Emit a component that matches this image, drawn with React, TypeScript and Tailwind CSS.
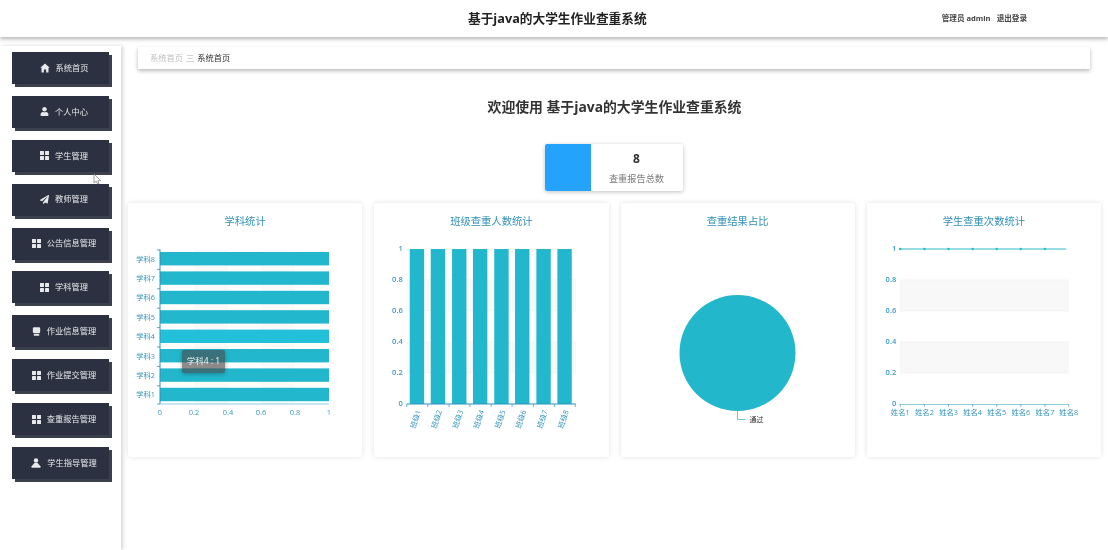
import { FaUser, FaPaperPlane } from "react-icons/fa";
import type { ReactNode } from "react";

const font = { fontFamily: '"Open Sans","Noto Sans CJK SC",sans-serif' };
const TEAL = "#22b7cc";
const AXIS = "#2f93bd";
const LABEL = "#3a9cc6";

function Home() {
  return (
    <svg viewBox="0 0 16 16" className="w-[10px] h-[10px]" fill="currentColor">
      <path d="M8 0.8 L15.6 7.6 L13.6 7.6 L13.6 15 L9.8 15 L9.8 10.4 L6.2 10.4 L6.2 15 L2.4 15 L2.4 7.6 L0.4 7.6 Z" />
    </svg>
  );
}

function Grid() {
  return (
    <svg viewBox="0 0 16 16" className="w-[9px] h-[9px]" fill="currentColor">
      <rect x="0" y="0" width="7" height="7" rx="0.6" />
      <rect x="9" y="0" width="7" height="7" rx="0.6" />
      <rect x="0" y="9" width="7" height="7" rx="0.6" />
      <rect x="9" y="9" width="7" height="7" rx="0.6" />
    </svg>
  );
}

function Order() {
  return (
    <svg viewBox="0 0 16 16" className="w-[9px] h-[9px]" fill="currentColor">
      <rect x="1.5" y="0.5" width="13" height="10.5" rx="2" />
      <rect x="3" y="12.5" width="10" height="3" rx="1.2" />
    </svg>
  );
}

function Teacher() {
  return (
    <svg viewBox="0 0 16 16" className="w-[10px] h-[10px]" fill="currentColor">
      <circle cx="8" cy="4" r="3.6" />
      <path d="M5.5 8 L10.5 8 L15 13 L15 15.5 L1 15.5 L1 13 Z" />
    </svg>
  );
}

const menu: { label: string; icon: ReactNode }[] = [
  { label: "系统首页", icon: <Home /> },
  { label: "个人中心", icon: <FaUser className="w-[9px] h-[9px]" /> },
  { label: "学生管理", icon: <Grid /> },
  { label: "教师管理", icon: <FaPaperPlane className="w-[9px] h-[9px]" /> },
  { label: "公告信息管理", icon: <Grid /> },
  { label: "学科管理", icon: <Grid /> },
  { label: "作业信息管理", icon: <Order /> },
  { label: "作业提交管理", icon: <Grid /> },
  { label: "查重报告管理", icon: <Grid /> },
  { label: "学生指导管理", icon: <Teacher /> },
];

function Sidebar() {
  return (
    <aside className="w-[121px] shrink-0 bg-white shadow-[2px_0_4px_rgba(0,0,0,0.16)] pt-[6px] pl-[12px] flex flex-col gap-[11.9px]">
      {menu.map((m) => (
        <div
          key={m.label}
          className="w-[97px] h-[32px] bg-[#2b3140] shadow-[3px_3px_0_#3a404c] flex items-center justify-center pl-[7px] gap-[6px] text-[#e8e9eb] text-[8.25px]"
        >
          {m.icon}
          <span>{m.label}</span>
        </div>
      ))}
    </aside>
  );
}

function Card({ title, originX, children }: { title: string; originX: number; children: ReactNode }) {
  return (
    <div className="relative h-[254px] bg-white rounded-[2px] shadow-[0_0_5px_rgba(0,0,0,0.12)] flex flex-col">
      <h3 className="h-[38px] pt-[10px] text-center text-[10.3px] leading-[16px] text-[#2f8fb8]">{title}</h3>
      <svg viewBox={`${originX} 241 234.25 216`} className="w-full h-[216px]" style={font}>
        {children}
      </svg>
    </div>
  );
}

const yVals = ["1", "0.8", "0.6", "0.4", "0.2", "0"];
const yPos = [249, 280, 311, 342, 373, 404];

function Bands({ x1, x2 }: { x1: number; x2: number }) {
  return (
    <>
      <rect x={x1} y={280} width={x2 - x1} height={31} fill="#f8f8f8" />
      <rect x={x1} y={342} width={x2 - x1} height={31} fill="#f8f8f8" />
      {[280, 311, 342, 373].map((y) => (
        <line key={y} x1={x1} x2={x2} y1={y} y2={y} stroke="#f0f0f0" strokeWidth="0.6" />
      ))}
    </>
  );
}

function YLabels({ x }: { x: number }) {
  return (
    <>
      {yVals.map((v, i) => (
        <text key={v} x={x} y={yPos[i] + 2} textAnchor="end" fontSize="7.5" fontWeight="600" fill={LABEL}>
          {v}
        </text>
      ))}
    </>
  );
}

function SubjectChart() {
  const ticks = [160, 194, 228, 261, 295, 329];
  const tv = ["0", "0.2", "0.4", "0.6", "0.8", "1"];
  const bars = [252, 271.4, 290.8, 310.2, 329.6, 349, 368.4, 387.8];
  return (
    <Card title="学科统计" originX={128}>
      <rect x={194} y={250} width={34} height={154} fill="#fafafa" />
      <rect x={261} y={250} width={34} height={154} fill="#fafafa" />
      {bars.map((y, i) => (
        <g key={y}>
          <rect x={160} y={y} width={169} height={13.4} fill={i === 4 ? "#22c1d9" : TEAL} />
          <text x={155} y={y + 9.5} textAnchor="end" fontSize="7.3" fill={AXIS}>
            {"学科" + (8 - i)}
          </text>
          <line x1={157} x2={160} y1={y - 2} y2={y - 2} stroke={AXIS} strokeWidth="0.8" />
        </g>
      ))}
      <line x1={157} x2={160} y1={404} y2={404} stroke={AXIS} strokeWidth="0.8" />
      <line x1={160} x2={160} y1={249.5} y2={404} stroke={AXIS} strokeWidth="1" />
      <line x1={160} x2={329} y1={404} y2={404} stroke="#8ccfe0" strokeWidth="1" />
      {ticks.map((x, i) => (
        <text key={x} x={x} y={415} textAnchor="middle" fontSize="7.5" fill={LABEL}>
          {tv[i]}
        </text>
      ))}
    </Card>
  );
}

function ClassChart() {
  const bars = [410, 431, 452.3, 473.2, 494.5, 515.3, 536.6, 557.6];
  return (
    <Card title="班级查重人数统计" originX={374.25}>
      <Bands x1={407} x2={576} />
      {bars.map((x, i) => (
        <g key={x}>
          <rect x={x} y={249} width={14.4} height={155} fill={TEAL} />
          <line x1={x - 3} x2={x - 3} y1={404} y2={407} stroke={AXIS} strokeWidth="0.7" />
          <text
            transform={`translate(${x + 9.5} 410.5) rotate(-72)`}
            textAnchor="end"
            dominantBaseline="middle"
            fontSize="7.3"
            fill={AXIS}
          >
            {"班级" + (i + 1)}
          </text>
        </g>
      ))}
      <line x1={575.5} x2={575.5} y1={404} y2={407} stroke={AXIS} strokeWidth="0.7" />
      <line x1={407} x2={576} y1={404} y2={404} stroke={AXIS} strokeWidth="1" />
      <YLabels x={403} />
    </Card>
  );
}

function ResultChart() {
  return (
    <Card title="查重结果占比" originX={620.5}>
      <circle cx={737} cy={353} r={58} fill="#23b7cc" />
      <path d="M737 411 V419.5 H745" fill="none" stroke={TEAL} strokeWidth="0.7" />
      <text x={749} y={422} fontSize="7" fill="#333">
        通过
      </text>
    </Card>
  );
}

function StudentChart() {
  const ticks = [900, 924.2, 948.3, 972.4, 996.5, 1020.6, 1044.7, 1068.5];
  return (
    <Card title="学生查重次数统计" originX={866.75}>
      <Bands x1={899.5} x2={1068.5} />
      <line x1={899.5} x2={1066} y1={249} y2={249} stroke="#30bcc6" strokeWidth="1.1" />
      {ticks.slice(0, 7).map((x) => (
        <circle key={x} cx={x} cy={249} r={1.3} fill="#30bcc6" />
      ))}
      <line x1={899.5} x2={1068.5} y1={404.5} y2={404.5} stroke="#8ccfe0" strokeWidth="1" />
      {ticks.map((x, i) => (
        <g key={x}>
          <line x1={x} x2={x} y1={404} y2={407} stroke={AXIS} strokeWidth="0.6" />
          <text x={x} y={415} textAnchor="middle" fontSize="7.3" fill={AXIS}>
            {"姓名" + (i + 1)}
          </text>
        </g>
      ))}
      <YLabels x={896} />
    </Card>
  );
}

export default function App() {
  return (
    <div className="relative w-[1108px] h-[550px] overflow-hidden bg-white flex flex-col blur-[0.35px]" style={font}>
      <header className="h-[37px] shrink-0 bg-white shadow-[0_2px_4px_rgba(0,0,0,0.3)] flex items-center z-10">
        <h1 className="ml-[468px] text-[12.7px] font-bold text-[#222]">基于java的大学生作业查重系统</h1>
        <div className="ml-auto mr-[81px] text-[7.6px] font-bold text-[#444] flex gap-[6px]">
          <span>管理员 admin</span>
          <span>退出登录</span>
        </div>
      </header>
      <div className="flex-1 flex pt-[9px] min-h-0">
        <Sidebar />
        <main className="flex-1 flex flex-col min-w-0 pl-[7px] pr-[7px]">
          <div className="ml-[10px] mr-[11px] mt-[1px] h-[22px] bg-white shadow-[0_2px_4px_rgba(0,0,0,0.28)] flex items-center pl-[12px] text-[8.25px] shrink-0">
            <span className="text-[#c0c0c0]">系统首页</span>
            <span className="text-[#c8c8c8] mx-[3px]">三</span>
            <span className="text-[#333]">系统首页</span>
          </div>
          <h2 className="mt-[28px] h-[20px] leading-[20px] text-center text-[13.85px] font-bold text-[#333] shrink-0">
            欢迎使用 基于java的大学生作业查重系统
          </h2>
          <div className="mt-[27px] self-center -translate-x-[1px] w-[138px] h-[47px] bg-white rounded-[2px] shadow-[0_1px_4px_rgba(0,0,0,0.25)] flex shrink-0">
            <div className="w-[46px] bg-[#24a3fd] rounded-l-[2px]" />
            <div className="flex-1 flex flex-col items-center">
              <div className="mt-[6px] h-[17px] leading-[17px] text-[12px] font-bold text-[#333]">8</div>
              <div className="mt-[5px] text-[9.2px] leading-[14px] text-[#7a7a7a]">查重报告总数</div>
            </div>
          </div>
          <div className="mt-[12px] grid grid-cols-4 gap-[12px]">
            <SubjectChart />
            <ClassChart />
            <ResultChart />
            <StudentChart />
          </div>
        </main>
      </div>
      <div className="absolute left-[182px] top-[350px] w-[43px] h-[23px] rounded-[2px] bg-[rgba(70,70,70,0.62)] shadow-[0_1px_4px_rgba(0,0,0,0.3)] flex items-center justify-center text-[8.5px] text-[#f2f2f2]">
        学科4 : 1
      </div>
      <svg className="absolute left-[93px] top-[173px] w-[9px] h-[12px]" viewBox="0 0 9 12">
        <path d="M1 1 V10 L3.2 8.2 L4.6 11 L6 10.4 L4.7 7.8 L7.6 7.6 Z" fill="#fff" stroke="#777" strokeWidth="0.7" />
      </svg>
    </div>
  );
}
